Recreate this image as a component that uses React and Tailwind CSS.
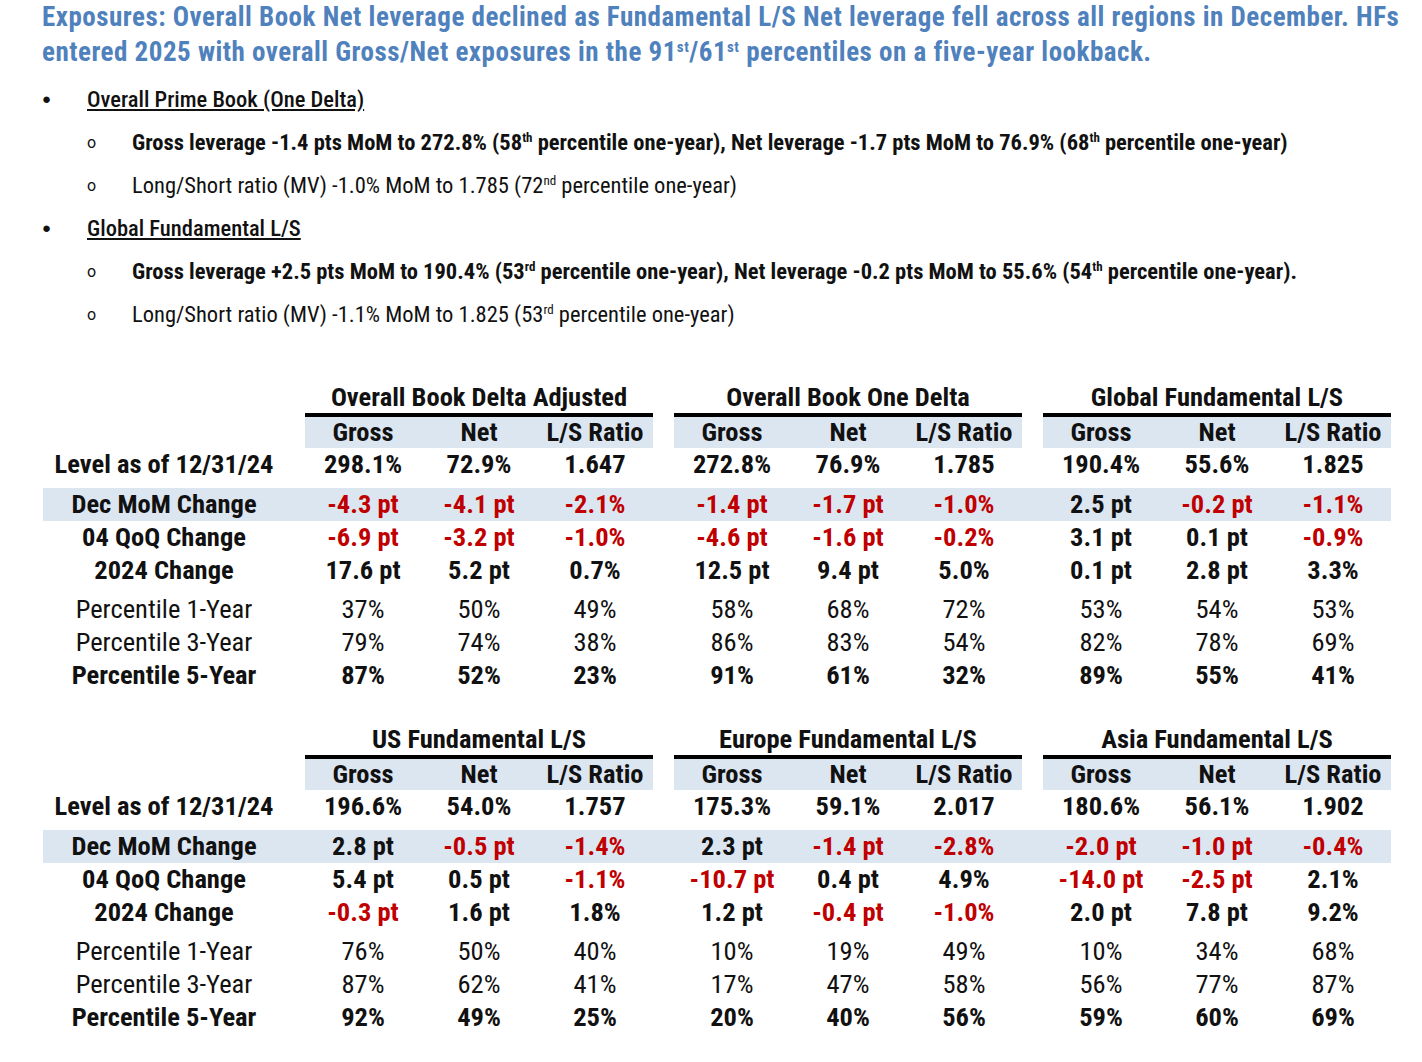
import React from 'react';

const font = { fontFamily: "Roboto, 'Liberation Sans', sans-serif" };

const RED = 'text-[#c00000]';

const tables = [
    {
        groups: ['Overall Book Delta Adjusted', 'Overall Book One Delta', 'Global Fundamental L/S'],
        level: ['298.1%', '72.9%', '1.647', '272.8%', '76.9%', '1.785', '190.4%', '55.6%', '1.825'],
        mom: ['-4.3 pt', '-4.1 pt', '-2.1%', '-1.4 pt', '-1.7 pt', '-1.0%', '2.5 pt', '-0.2 pt', '-1.1%'],
        qoq: ['-6.9 pt', '-3.2 pt', '-1.0%', '-4.6 pt', '-1.6 pt', '-0.2%', '3.1 pt', '0.1 pt', '-0.9%'],
        ytd: ['17.6 pt', '5.2 pt', '0.7%', '12.5 pt', '9.4 pt', '5.0%', '0.1 pt', '2.8 pt', '3.3%'],
        p1: ['37%', '50%', '49%', '58%', '68%', '72%', '53%', '54%', '53%'],
        p3: ['79%', '74%', '38%', '86%', '83%', '54%', '82%', '78%', '69%'],
        p5: ['87%', '52%', '23%', '91%', '61%', '32%', '89%', '55%', '41%'],
    },
    {
        groups: ['US Fundamental L/S', 'Europe Fundamental L/S', 'Asia Fundamental L/S'],
        level: ['196.6%', '54.0%', '1.757', '175.3%', '59.1%', '2.017', '180.6%', '56.1%', '1.902'],
        mom: ['2.8 pt', '-0.5 pt', '-1.4%', '2.3 pt', '-1.4 pt', '-2.8%', '-2.0 pt', '-1.0 pt', '-0.4%'],
        qoq: ['5.4 pt', '0.5 pt', '-1.1%', '-10.7 pt', '0.4 pt', '4.9%', '-14.0 pt', '-2.5 pt', '2.1%'],
        ytd: ['-0.3 pt', '1.6 pt', '1.8%', '1.2 pt', '-0.4 pt', '-1.0%', '2.0 pt', '7.8 pt', '9.2%'],
        p1: ['76%', '50%', '40%', '10%', '19%', '49%', '10%', '34%', '68%'],
        p3: ['87%', '62%', '41%', '17%', '47%', '58%', '56%', '77%', '87%'],
        p5: ['92%', '49%', '25%', '20%', '40%', '56%', '59%', '60%', '69%'],
    },
];

const Row = ({ label, values, bold = true, band = false, h = 'h-[33px]', colorize = false }) => (
    <div className={`flex items-center ${h} ${band ? 'bg-[#dce6f1]' : ''}`}>
        <div className={`w-[242px] text-center ${bold ? 'font-bold' : 'font-normal'}`}>{label}</div>
        {[0, 1, 2].map((g) => (
            <div key={g} className={`flex ${g === 0 ? 'ml-[20px]' : 'ml-[21px]'}`}>
                {values.slice(g * 3, g * 3 + 3).map((v, i) => (
                    <div
                        key={i}
                        className={`w-[116px] text-center ${bold ? 'font-bold' : 'font-normal'} ${
                            colorize && v.startsWith('-') ? RED : ''
                        }`}
                    >
                        {v}
                    </div>
                ))}
            </div>
        ))}
    </div>
);

const DataTable = ({ t }) => (
    <div className="w-[1348px] text-[26.5px] leading-none text-[#111] font-stretch-condensed">
        <div className="flex h-[32px] items-center">
            <div className="w-[242px]" />
            {t.groups.map((g, i) => (
                <div
                    key={g}
                    className={`w-[348px] text-center font-bold ${i === 0 ? 'ml-[20px]' : 'ml-[21px]'}`}
                >
                    {g}
                </div>
            ))}
        </div>
        <div className="flex">
            <div className="w-[242px]" />
            {t.groups.map((g, i) => (
                <div
                    key={g}
                    className={`flex w-[348px] h-[35px] border-t-4 border-black bg-[#dce6f1] items-center font-bold ${
                        i === 0 ? 'ml-[20px]' : 'ml-[21px]'
                    }`}
                >
                    <div className="w-[116px] text-center">Gross</div>
                    <div className="w-[116px] text-center">Net</div>
                    <div className="w-[116px] text-center">L/S Ratio</div>
                </div>
            ))}
        </div>
        <Row label="Level as of 12/31/24" values={t.level} h="h-[32px]" />
        <div className="h-[8px]" />
        <Row label="Dec MoM Change" values={t.mom} band colorize />
        <Row label="04 QoQ Change" values={t.qoq} colorize />
        <Row label="2024 Change" values={t.ytd} colorize />
        <div className="h-[6px]" />
        <Row label="Percentile 1-Year" values={t.p1} bold={false} />
        <Row label="Percentile 3-Year" values={t.p3} bold={false} />
        <Row label="Percentile 5-Year" values={t.p5} />
    </div>
);

const Bullet = ({ children }) => (
    <div className="flex items-center h-[43px]">
        <span className="w-[45px] text-[15px]">●</span>
        <span className="underline underline-offset-2 font-medium">{children}</span>
    </div>
);

const Sub = ({ children, bold }) => (
    <div className="flex items-center h-[43px] pl-[45px]">
        <span className="w-[45px] text-[16px] font-stretch-normal">o</span>
        <span className={bold ? 'font-bold' : 'font-normal'}>{children}</span>
    </div>
);

const Sup = ({ children, size = 'text-[13px]' }) => (
    <sup className={`${size} leading-none align-[0.6em] relative top-0`}>{children}</sup>
);

const App = () => {
    return (
        <div className="w-[1422px] h-[1062px] bg-white overflow-hidden" style={font}>
            <div className="pl-[42px] pr-[10px] text-[27px] leading-[35px] font-bold text-[#4f81bd] font-stretch-[83%] tracking-[0.5px] whitespace-nowrap">
                Exposures: Overall Book Net leverage declined as Fundamental L/S Net leverage fell across all
                regions in December. HFs
                <br />
                entered 2025 with overall Gross/Net exposures in the 91<Sup size="text-[15px]">st</Sup>/61
                <Sup size="text-[15px]">st</Sup> percentiles on a five-year lookback.
            </div>

            <div className="mt-[8px] pl-[42px] text-[22.5px] leading-none text-[#111] font-stretch-condensed">
                <Bullet>Overall Prime Book (One Delta)</Bullet>
                <Sub bold>
                    Gross leverage -1.4 pts MoM to 272.8% (58<Sup>th</Sup> percentile one-year), Net leverage -1.7
                    pts MoM to 76.9% (68<Sup>th</Sup> percentile one-year)
                </Sub>
                <Sub>
                    Long/Short ratio (MV) -1.0% MoM to 1.785 (72<Sup>nd</Sup> percentile one-year)
                </Sub>
                <Bullet>Global Fundamental L/S</Bullet>
                <Sub bold>
                    Gross leverage +2.5 pts MoM to 190.4% (53<Sup>rd</Sup> percentile one-year), Net leverage -0.2
                    pts MoM to 55.6% (54<Sup>th</Sup> percentile one-year).
                </Sub>
                <Sub>
                    Long/Short ratio (MV) -1.1% MoM to 1.825 (53<Sup>rd</Sup> percentile one-year)
                </Sub>
            </div>

            <div className="mt-[45px] pl-[43px] flex flex-col gap-[31px]">
                <DataTable t={tables[0]} />
                <DataTable t={tables[1]} />
            </div>
        </div>
    );
};

export default App;
